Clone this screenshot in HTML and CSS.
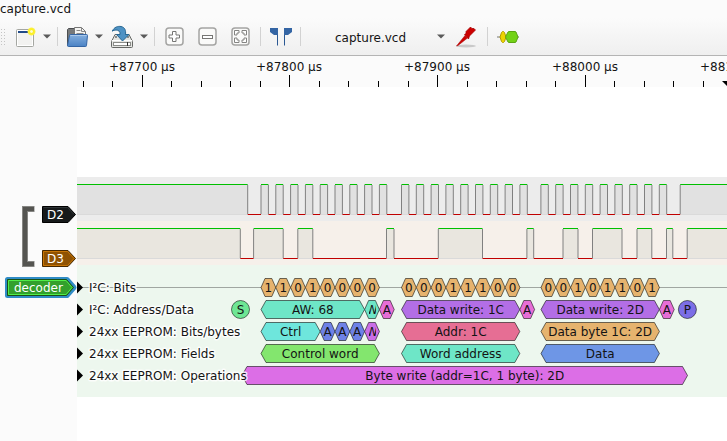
FILE: index.html
```html
<!DOCTYPE html>
<html lang="en">
<head>
<meta charset="utf-8">
<title>capture.vcd</title>
<link rel="stylesheet" href="styles.css">
</head>
<body>
<header class="title">capture.vcd</header>
<div class="toolbar" role="toolbar" aria-label="Session">
  <span class="handle"></span>
  <button class="tool split" aria-label="New view">
    <svg width="22" height="22" viewBox="0 0 22 22"><defs><radialGradient id="glow"><stop offset=".2" stop-color="#fffbd0"/><stop offset=".4" stop-color="#fbf020"/><stop offset=".75" stop-color="#fbf03c"/><stop offset="1" stop-color="#fbf03c" stop-opacity="0"/></radialGradient></defs><rect x="2.500" y="3.500" width="17" height="17" rx="1" fill="#f2f2f0" stroke="#a5a7a2"/><rect x="3.500" y="4.500" width="15" height="15" fill="none" stroke="#fff"/><path d="M4 6h12" stroke="#204a87" stroke-width="2"/><circle cx="17.500" cy="5.500" r="4.500" fill="url(#glow)"/></svg>
  </button>
  <button class="arrow" aria-label="New view menu"><svg width="8" height="5" viewBox="0 0 8 5"><path d="M0 .5h8L4 4.500z"/></svg></button>
  <span class="sep"></span>
  <button class="tool split" aria-label="Open">
    <svg width="22" height="22" viewBox="0 0 22 22"><defs><linearGradient id="folder" x2="0" y2="1"><stop stop-color="#86b0df"/><stop offset="1" stop-color="#4a82c4"/></linearGradient></defs><path d="M1.500 19.500v-16l1-1h6v2h9v15z" fill="#77797a" stroke="#4c4e50"/><path d="M8.500 12V1.500h7l4 4V12z" fill="#f4f4f2" stroke="#777"/><path d="M15.500 1.500v4h4M10.500 4.500h4M10.500 7.500h7" fill="none" stroke="#888"/><path d="M3.500 9.500q0-1 1-1h16q1 0 1 1l-1 10q0 1-1 1h-17q-1 0-1-1z" fill="url(#folder)" stroke="#3465a4"/><path d="M4.500 9.500h16" stroke="#a9c8ea"/></svg>
  </button>
  <button class="arrow" aria-label="Open menu"><svg width="8" height="5" viewBox="0 0 8 5"><path d="M0 .5h8L4 4.500z"/></svg></button>
  <button class="tool split" aria-label="Save">
    <svg width="24" height="24" viewBox="0 0 24 24"><path d="M5 9.500h14l3.500 7v5q0 1-1 1h-19q-1 0-1-1v-5z" fill="#e4e5e2" stroke="#666865"/><path d="M2 15.500h20" stroke="#fff"/><rect x="3.500" y="17.500" width="17" height="3" fill="#fff" stroke="#8a8c88"/><path d="M17.500 17v4M5 12h2M17 12h2" stroke="#333"/><path d="M2.500 6C4 2 8 1 11 1.500c4 .8 5 4 4.500 8h3.500l-6.500 6.500-6-6.500h3.500c.5-3-1.500-4.500-4-4.500q-2 0-4 1z" fill="#4e92c4" stroke="#286792"/></svg>
  </button>
  <button class="arrow" aria-label="Save menu"><svg width="8" height="5" viewBox="0 0 8 5"><path d="M0 .5h8L4 4.500z"/></svg></button>
  <span class="sep"></span>
  <button class="tool" aria-label="Zoom in">
    <svg width="19" height="19" viewBox="0 0 19 19"><rect x="1" y="1" width="17" height="17" rx="3" fill="#fafaf9" stroke="#a4a4a2" stroke-width="1.500"/><path d="M7.500 4.500h3.500v3.500h3.500v3h-3.500v3.500h-3.500v-3.500h-3.500V8h3.500z" fill="#fff" stroke="#767674"/></svg>
  </button>
  <button class="tool" aria-label="Zoom out">
    <svg width="19" height="19" viewBox="0 0 19 19"><rect x="1" y="1" width="17" height="17" rx="3" fill="#fafaf9" stroke="#a4a4a2" stroke-width="1.500"/><rect x="4.500" y="8.500" width="10" height="3" fill="#fff" stroke="#767674"/></svg>
  </button>
  <button class="tool" aria-label="Zoom to fit">
    <svg width="19" height="19" viewBox="0 0 19 19"><rect x="1" y="1" width="17" height="17" rx="3" fill="#fafaf9" stroke="#a4a4a2" stroke-width="1.500"/><path id="corner" d="M3.500 8V3.500H8v2.500H6v2z" fill="#fff" stroke="#848482"/><use href="#corner" transform="matrix(-1 0 0 1 19 0)"/><use href="#corner" transform="matrix(1 0 0 -1 0 19)"/><use href="#corner" transform="matrix(-1 0 0 -1 19 19)"/></svg>
  </button>
  <span class="sep"></span>
  <button class="tool" aria-label="Show cursors">
    <svg width="24" height="20" viewBox="0 0 24 20"><path d="M1.500 1.500h7v17M22.500 1.500h-7v17" fill="none" stroke="#2a5893"/><path d="M1 1h8v7H5L1 5zM23 1h-8v7h4l4-3z" fill="#3465a4"/></svg>
  </button>
  <span class="sep"></span>
  <label class="device"><select aria-label="Device"><option>capture.vcd</option></select><svg width="8" height="5" viewBox="0 0 8 5"><path d="M0 .5h8L4 4.500z"/></svg></label>
  <button class="tool probe" aria-label="Configure channels">
    <svg width="22" height="22" viewBox="0 0 22 22"><ellipse cx="11" cy="20" rx="10" ry="1.500" fill="#c9c9c9"/><path d="M1.500 20L10 9.500l2.500 2.500L3 19.500z" fill="#c00" stroke="#a40000" stroke-width=".5"/><path d="M9.500 8.500l1.500-1V5.500L15.500 1l1.500 1.500h2l1.500 1.500-6 6-1 3z" fill="#c00" stroke="#a00000" stroke-width=".7"/></svg>
  </button>
  <span class="sep"></span>
  <button class="tool" aria-label="Add decoder">
    <svg width="22" height="14" viewBox="0 0 22 14"><path d="M0 7h22" stroke="#777"/><path d="M3 7l1.500-4.500 1-1h1l1 1L9 7l-1.500 4.500-1 1h-1l-1-1z" fill="#edd400" stroke="#b09c00"/><path d="M8.500 7l2.500-5 1-.5h6l1 .5 2 5-2 5-1 .5h-6l-1-.5z" fill="#73d216" stroke="#5aa612"/></svg>
  </button>
</div>
<main class="view">
  <div class="spacer"></div>
  <svg class="ruler" id="ruler" role="img" aria-label="Time ruler"></svg>

  <div class="margin"></div>
  <div class="blank"></div>

  <div class="margin">
    <svg class="bracket" width="14" height="62" viewBox="0 0 14 62"><path d="M12.500 3H3v55h9.500" fill="none" stroke="#868683" stroke-width="6"/><path d="M12 3H3v55h9" fill="none" stroke="#555551" stroke-width="4"/></svg>
    <svg class="tag signal" width="36" height="18" viewBox="0 0 36 18"><path d="M.5.500H26L33.500 8.500 26 16.500H.5z" fill="#16191a" stroke="#000"/><path d="M1.500 1.500H25.500L32 8.500" fill="none" stroke="#2e3436"/><text x="5" y="13">D2</text></svg>
  </div>
  <svg class="trace" id="d2" role="img" aria-label="D2"></svg>

  <div class="margin">
    <svg class="tag signal" width="36" height="18" viewBox="0 0 36 18"><path d="M.5.500H26L33.500 8.500 26 16.500H.5z" fill="#8f5202" stroke="#482900"/><path d="M1.500 15.500V1.500H25.500L32 8.500 25.500 15.500z" fill="none" stroke="#c77404"/><text x="5" y="13">D3</text></svg>
  </div>
  <svg class="trace" id="d3" role="img" aria-label="D3"></svg>

  <div class="margin">
    <svg class="tag decoder" width="74" height="24" viewBox="0 0 74 24"><path d="M3.500 3.500H63L70 11.500 63 19.500H3.500z" fill="none" stroke="#308cc6" stroke-width="5" stroke-linejoin="round"/><path d="M3.500 3.500H62.500L69.500 11.500 62.500 19.500H3.500z" fill="#33a02c" stroke="#194f16"/><path d="M4.500 4.500H62L68 11.500 62 18.500H4.500z" fill="none" stroke="#50ee48"/><text x="10" y="16">decoder</text></svg>
  </div>
  <div class="rows" id="rows"></div>

  <div class="margin"></div>
  <div class="rest"></div>
</main>
<script src="script.js"></script>
</body>
</html>
```
FILE: styles.css
```css
* { box-sizing: border-box; }
body {
  margin: 0;
  min-height: 100vh;
  display: flex;
  flex-direction: column;
  background: #fbfbfb;
  color: #141414;
  font: 12px/14px "DejaVu Sans", sans-serif;
  overflow: hidden;
}
svg { display: block; flex: none; }
.title { height: 18px; padding-top: 2px; }
.toolbar {
  display: flex;
  align-items: center;
  height: 38px;
  border-bottom: 1px solid #b4b4b4;
  background: linear-gradient(#fbfbfb, #efefef);
}
.handle {
  width: 6px;
  height: 18px;
  margin-right: 3px;
  background: radial-gradient(circle, #c4c4c4 1px, transparent 1px) 0 0 / 3px 3px;
}
.tool, .arrow {
  display: flex;
  align-items: center;
  justify-content: center;
  flex: none;
  width: 33px;
  height: 32px;
  padding: 0;
  border: 0;
  background: none;
}
.split { width: 31px; }
.arrow { width: 14px; }
.arrow path, .device path { fill: #5a5a5a; }
.sep {
  flex: none;
  width: 1px;
  height: 19px;
  margin: 0 3px;
  background: #d2d2d2;
}
.device {
  display: flex;
  align-items: center;
  width: 147px;
  padding-right: 6px;
}
.device select {
  flex: 1;
  min-width: 0;
  height: 28px;
  padding: 2px 0 0 31px;
  border: 0;
  appearance: none;
  background: none;
  color: inherit;
  font: inherit;
}
.probe { padding-right: 4px; }
.view {
  flex: 1;
  display: grid;
  grid-template-columns: 77px minmax(0, 1fr);
  grid-template-rows: 31px 90px 44px 44px auto 1fr;
}
.margin { position: relative; }
.ruler, .trace, .lane { width: 100%; }
.ruler { height: 31px; }
.trace { height: 44px; }
.blank, .rest { background: #fff; }
.rows { padding: 11px 0; background: #edf7ee; }
.lane { height: 22px; }
#d2 { background: #ececec; }
#d3 { background: #f6f0ea; }
text { font: 12px "DejaVu Sans", sans-serif; fill: #141414; }
.mid { text-anchor: middle; }
.tag text { fill: #fff; }
.signal { margin: 29px 0 0 42px; }
.decoder { margin: 11px 0 0 4px; }
.bracket { position: absolute; left: 22px; top: 29px; }
.tick { stroke: #000; }
.high { stroke: #00c000; }
.low { stroke: #c00000; }
.edge { stroke: #808080; }
.base { stroke: #dadada; }
.wire { stroke: #a0a6a1; }
.ann { stroke: #000; stroke-opacity: .55; }
.name { stroke: #fff; stroke-opacity: .8; stroke-width: 3px; stroke-linejoin: round; paint-order: stroke; }
#d2 .fill { fill: #e1e1e1; }
#d3 .fill { fill: #e9e6df; }
```
FILE: script.js
```js
// Horizontal coordinates are on the time axis, whose origin is ORIGIN px left of the canvas.
const ORIGIN = 77;
const FAR = 4000;

const line = (cls, x1, y1, x2, y2) =>
  `<line class="${cls}" x1="${x1}" y1="${y1}" x2="${x2}" y2="${y2}"/>`;
const shift = (body) => `<g transform="translate(${-ORIGIN} 0)">${body}</g>`;

// Draws the ticks that fall inside the window, and one label past its edge.
function ruler() {
  let out = "";
  const end = window.innerWidth + 30;
  for (let i = -2; 142.2 + i * 29.54 < end; i++) {
    const x = Math.floor(142.2 + i * 29.54) + 0.5;
    const major = i % 5 === 0;
    out += line("tick", x, major ? 19 : 25, x, 31);
    if (major) {
      out += `<text class="mid" x="${x - 0.5}" y="15">+${87700 + i * 20} µs</text>`;
    }
  }
  out += `<path d="M722 25h12l-6 6z"/>`;
  document.getElementById("ruler").innerHTML = shift(out);
}

// The signal starts high and toggles at each edge.
function trace(id, edges) {
  let fills = "", levels = "", sides = "";
  let from = ORIGIN, high = true;
  for (const x of [...edges, FAR]) {
    if (high) fills += `<rect class="fill" x="${from}" y="8" width="${x - from}" height="29"/>` + line("base", from, 37.5, x, 37.5);
    levels += high ? line("high", from, 7.5, x, 7.5) : line("low", from, 37.5, x, 37.5);
    if (x !== FAR) sides += line("edge", x, 8, x, 37);
    from = x;
    high = !high;
  }
  document.getElementById(id).innerHTML = shift(fills + sides + levels);
}

const clock = [247.7];
for (const start of [261, 401.5, 540.9]) {
  for (let i = 0; i < 9; i++) clock.push(start + i * 14.8, start + i * 14.8 + 7.4);
}
clock.push(680.2);

const WORDS = [[261, 379.4], [401.5, 519.8], [541, 659.4]];
const ORANGE = "#e6b36e", TEAL = "#6ee6c7", PINK = "#e66ed6", PURPLE = "#b36ee6", BLUE = "#6e82e6";

const bits = WORDS.flatMap(([x], w) =>
  [...["11010000", "00011100", "00101101"][w]].map((b, i) => [x + i * 14.8, x + (i + 1) * 14.8, b, ORANGE]));

const lanes = [
  ["I²C: Bits", bits],
  ["I²C: Address/Data", [
    [240.5, 240.5, "S", "#6ee694"],
    [261, 364.6, "AW: 68", TEAL], [364.6, 379.4, "W", TEAL], [379.4, 394.2, "A", PINK],
    [...WORDS[1], "Data write: 1C", PURPLE], [519.8, 534.6, "A", PINK],
    [...WORDS[2], "Data write: 2D", PURPLE], [659.4, 674.2, "A", PINK],
    [687.4, 687.4, "P", "#7c6ee6"]]],
  ["24xx EEPROM: Bits/bytes", [
    [261, 320.2, "Ctrl", "#6ee6dc"],
    [320.2, 335, "A", BLUE], [335, 349.8, "A", BLUE], [349.8, 364.6, "A", BLUE],
    [364.6, 379.4, "W", "#ca6ee6"],
    [...WORDS[1], "Addr: 1C", "#e66e94"], [...WORDS[2], "Data byte 1C: 2D", ORANGE]]],
  ["24xx EEPROM: Fields", [
    [...WORDS[0], "Control word", "#83e66e"], [...WORDS[1], "Word address", TEAL],
    [...WORDS[2], "Data", "#6e96e6"]]],
  ["24xx EEPROM: Operations", [[242, 687.5, "Byte write (addr=1C, 1 byte): 2D", "#dc6ee6"]]],
];

function annotation([a, b, label, color]) {
  const mid = (a + b) / 2;
  const tip = b - a < 20 ? 4 : 5;
  const shape = a === b
    ? `<circle class="ann" cx="${a}" cy="11.5" r="9" fill="${color}"/>`
    : `<path class="ann" fill="${color}" d="M${a} 11.500L${a + tip} 2.500H${b - tip}L${b} 11.500 ${b - tip} 20.500H${a + tip}z"/>`;
  const text = label === "W"
    ? `<svg x="${mid - 3}" y="0" width="7" height="22"><text class="mid" x="3" y="16">W</text></svg>`
    : `<text class="mid" x="${mid}" y="16">${label}</text>`;
  return shape + text;
}

ruler();
window.addEventListener("resize", ruler);
trace("d2", clock);
trace("d3", [240.3, 253.6, 283.2, 297.8, 312.8, 386.5, 394, 438.3, 482.5, 526.9, 533.7,
  563, 578, 592.5, 622, 637, 651.8, 666.5, 672.8, 687.2]);
document.getElementById("rows").innerHTML = lanes.map(([name, items], i) =>
  `<svg class="lane">${shift(
    (i === 0 ? line("wire", ORIGIN, 11.5, FAR, 11.5) : "") +
    items.map(annotation).join("") +
    `<path d="M77 5.500L83 11.500 77 17.500z"/><text class="name" x="89" y="16">${name}</text>`)}</svg>`).join("");
```
